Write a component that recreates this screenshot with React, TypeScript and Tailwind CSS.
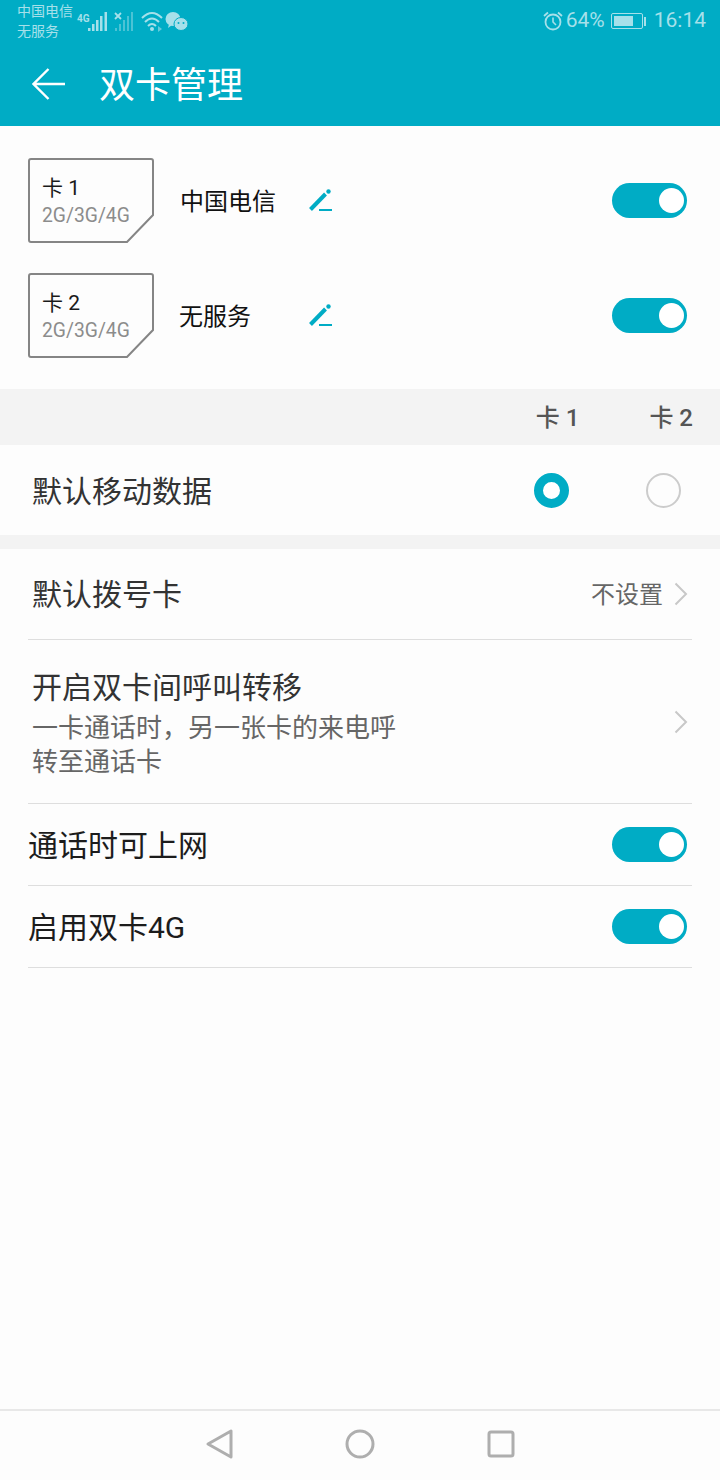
import React from 'react';

const CJK = "font-['Roboto','Noto_Sans_CJK_SC',sans-serif]";

const Toggle = () => (
    <div className="flex h-[35px] w-[75px] items-center justify-end rounded-full bg-[#00acc5] pr-[3px]">
        <div className="h-[25px] w-[25px] rounded-full bg-white" />
    </div>
);

const Pencil = () => (
    <svg width="26" height="26" viewBox="0 0 26 26" fill="none">
        <path d="M2.5 21.5 L17.5 6" stroke="#00acc5" strokeWidth="4" />
        <circle cx="20.5" cy="3.5" r="2.2" fill="#00acc5" />
        <path d="M11 22 H24" stroke="#00acc5" strokeWidth="2" />
    </svg>
);

const Chevron = () => (
    <svg width="14" height="24" viewBox="0 0 14 24" fill="none">
        <path d="M1.5 1.5 L12 12 L1.5 22.5" stroke="#c8c8c8" strokeWidth="2" />
    </svg>
);

const SimRow = ({ card, name, nameOffset }: { card: string; name: string; nameOffset: string }) => (
    <div className="flex h-[85px] items-center pl-[28px] pr-[33px]">
        <div className="relative h-[85px] w-[126px] pl-[14px] pt-[16px]">
            <svg className="absolute inset-0" width="126" height="85" viewBox="0 0 126 85" fill="none">
                <path
                    d="M3 1 H123 Q125 1 125 3 V57 L99 84 H3 Q1 84 1 82 V3 Q1 1 3 1 Z"
                    stroke="#858585"
                    strokeWidth="2"
                />
            </svg>
            <div className="relative text-[21px] leading-[28px] text-[#1a1a1a]">{card}</div>
            <div className="relative pt-[1px] text-[19.3px] leading-[25px] text-[#8c8c8c]">2G/3G/4G</div>
        </div>
        <div className={`${nameOffset} w-[154px] pt-[2px] text-[24px] leading-[32px] text-[#111]`}>{name}</div>
        <Pencil />
        <div className="ml-auto">
            <Toggle />
        </div>
    </div>
);

const SwitchRow = ({ label }: { label: string }) => (
    <div className="flex h-[82px] items-center justify-between border-b border-[#dedede] pr-[5px]">
        <span className="pt-[2px] text-[30px] leading-[40px] text-[#1c1c1c]">{label}</span>
        <Toggle />
    </div>
);

const App: React.FC = () => {
    return (
        <div className={`flex h-[1480px] w-[720px] flex-col bg-[#fdfdfd] ${CJK}`}>
            {/* Status bar and toolbar */}
            <div className="h-[126px] bg-[#00acc5] text-white">
                <div className="flex h-[42px] items-center justify-between pl-[17px] pr-[14px] text-[#a6e0ea]">
                    <div className="flex items-center">
                        <div className="text-[14px] leading-[20px]">
                            <div>中国电信</div>
                            <div>无服务</div>
                        </div>
                        <div className="relative ml-[1px] mt-[2px]">
                            <span className="absolute left-[3px] top-[5px] text-[10px] font-bold leading-[10px]">4G</span>
                            <svg width="118" height="26" viewBox="0 0 118 26" fill="none">
                                <rect x="14" y="19" width="2.5" height="3" fill="#a6e0ea" />
                                <rect x="18" y="15" width="2.5" height="7" fill="#a6e0ea" />
                                <rect x="22" y="11" width="2.5" height="11" fill="#a6e0ea" />
                                <rect x="26" y="7" width="2.5" height="15" fill="#a6e0ea" />
                                <rect x="30.5" y="3" width="2.5" height="19" fill="#a6e0ea" />
                                <g opacity="0.45">
                                    <rect x="41" y="19" width="2" height="3" fill="#a6e0ea" />
                                    <rect x="45" y="15" width="2" height="7" fill="#a6e0ea" />
                                    <rect x="49" y="11" width="2" height="11" fill="#a6e0ea" />
                                    <rect x="53" y="7" width="2" height="15" fill="#a6e0ea" />
                                    <rect x="57" y="3" width="2" height="19" fill="#a6e0ea" />
                                </g>
                                <path d="M41 4 L47 10 M47 4 L41 10" stroke="#a6e0ea" strokeWidth="1.8" />
                                <path d="M68 9 Q78 -1 88 9" stroke="#a6e0ea" strokeWidth="2" />
                                <path d="M71 13 Q78 6 85 13" stroke="#a6e0ea" strokeWidth="2" />
                                <path d="M74 17 Q78 13 82 17" stroke="#a6e0ea" strokeWidth="2" />
                                <circle cx="78" cy="20" r="2" fill="#a6e0ea" />
                                <path d="M84 17 L88 20 L84 23 Z" fill="#a6e0ea" opacity="0.6" />
                                <ellipse cx="99" cy="10" rx="7.5" ry="7" fill="#a6e0ea" />
                                <path d="M95 15 L94 19 L98 16 Z" fill="#a6e0ea" />
                                <ellipse cx="107" cy="15" rx="7" ry="6.5" fill="#a6e0ea" stroke="#00acc5" />
                                <circle cx="104.5" cy="14" r="1" fill="#00acc5" />
                                <circle cx="109.5" cy="14" r="1" fill="#00acc5" />
                            </svg>
                        </div>
                    </div>
                    <div className="flex items-center">
                        <svg width="22" height="22" viewBox="0 0 22 22" fill="none">
                            <circle cx="11" cy="12" r="7.5" stroke="#a6e0ea" strokeWidth="1.8" />
                            <path d="M11 7.5 V12 L14 15" stroke="#a6e0ea" strokeWidth="1.6" />
                            <path d="M2 6 L6 2.5 M20 6 L16 2.5" stroke="#a6e0ea" strokeWidth="1.8" />
                        </svg>
                        <span className="ml-[2px] text-[21px]">64%</span>
                        <div className="ml-[6px] flex items-center">
                            <div className="h-[16px] w-[32px] rounded-[2px] border border-[#a6e0ea] p-[2px]">
                                <div className="h-full w-[19px] bg-[#a6e0ea]" />
                            </div>
                            <div className="ml-[1px] h-[9px] w-[2px] bg-[#a6e0ea]" />
                        </div>
                        <span className="ml-[8px] text-[21px]">16:14</span>
                    </div>
                </div>
                <div className="flex h-[84px] items-center pl-[32px]">
                    <svg width="34" height="34" viewBox="0 0 34 34" fill="none">
                        <path d="M33 17 H2 M16.5 2 L1.5 17 L16.5 32" stroke="white" strokeWidth="2.4" />
                    </svg>
                    <span className="ml-[33px] pt-[3px] text-[36px] leading-[46px]">双卡管理</span>
                </div>
            </div>

            {/* SIM cards */}
            <div className="flex h-[263px] flex-col gap-[30px] pt-[32px]">
                <SimRow card="卡 1" name="中国电信" nameOffset="pl-[26px]" />
                <SimRow card="卡 2" name="无服务" nameOffset="pl-[25px]" />
            </div>

            {/* Default data card */}
            <div className="flex h-[56px] items-center justify-end bg-[#f3f3f3] pr-[27px] pt-[2px] text-[24px] font-medium leading-[32px] text-[#555]">
                <span>卡 1</span>
                <span className="ml-[70px]">卡 2</span>
            </div>
            <div className="flex h-[90px] items-center pl-[32px] pr-[39px]">
                <span className="pt-[3px] text-[30px] leading-[40px] text-[#333]">默认移动数据</span>
                <div className="ml-auto h-[35px] w-[35px] rounded-full border-[9px] border-[#00acc5] bg-white" />
                <div className="ml-[77px] h-[35px] w-[35px] rounded-full border-2 border-[#cccccc]" />
            </div>
            <div className="h-[14px] bg-[#f3f3f3]" />

            {/* Settings list */}
            <div className="px-[28px]">
                <div className="flex h-[91px] items-center justify-between border-b border-[#dedede] pl-[4px] pr-[4px]">
                    <span className="pt-[2px] text-[30px] leading-[40px] text-[#333]">默认拨号卡</span>
                    <div className="flex items-center">
                        <span className="pt-[2px] text-[24px] leading-[32px] text-[#666]">不设置</span>
                        <div className="ml-[11px]">
                            <Chevron />
                        </div>
                    </div>
                </div>
                <div className="flex h-[164px] items-center justify-between border-b border-[#dedede] pl-[4px] pr-[4px]">
                    <div className="pt-[3px]">
                        <div className="text-[30px] leading-[40px] text-[#333]">开启双卡间呼叫转移</div>
                        <div className="mt-[3px] w-[370px] text-[26px] leading-[34px] text-[#666]">
                            一卡通话时，另一张卡的来电呼转至通话卡
                        </div>
                    </div>
                    <Chevron />
                </div>
                <SwitchRow label="通话时可上网" />
                <SwitchRow label="启用双卡4G" />
            </div>

            {/* Navigation bar */}
            <div className="mt-auto flex h-[71px] items-center justify-center gap-[100px] border-t-2 border-[#e8e8e8] pb-[3px]">
                <svg width="40" height="40" viewBox="0 0 40 40" fill="none">
                    <path d="M8 20 L31 7 V33 Z" stroke="#aeaeae" strokeWidth="3" strokeLinejoin="round" />
                </svg>
                <svg width="40" height="40" viewBox="0 0 40 40" fill="none">
                    <circle cx="20" cy="20" r="13" stroke="#aeaeae" strokeWidth="3" />
                </svg>
                <svg width="40" height="40" viewBox="0 0 40 40" fill="none">
                    <rect x="9" y="8" width="24" height="24" rx="2" stroke="#aeaeae" strokeWidth="3" />
                </svg>
            </div>
        </div>
    );
};

export default App;
